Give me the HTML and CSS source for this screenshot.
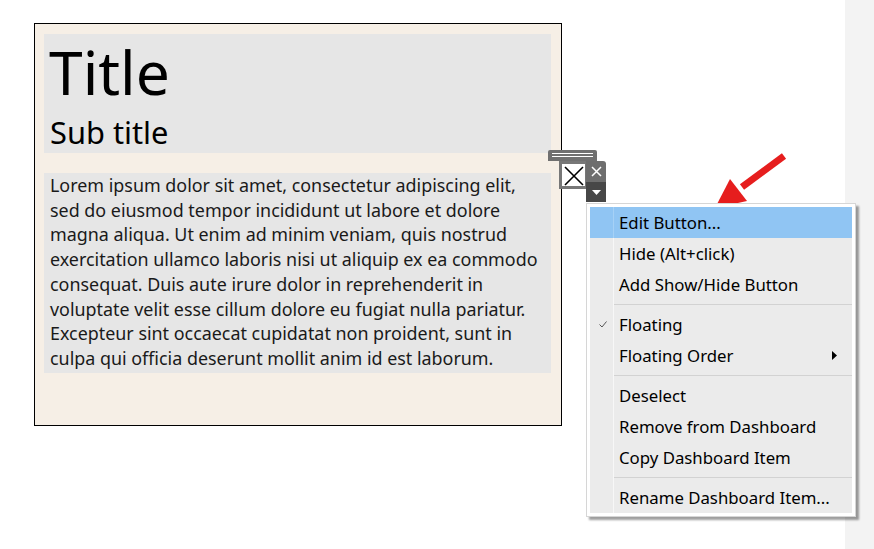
FILE: index.html
```html
<!DOCTYPE html>
<html>
<head>
<meta charset="utf-8">
<link rel="stylesheet" href="styles.css">
</head>
<body>
<div class="page">
  <main class="canvas">
    <section class="panel">
      <div class="heading">
        <div class="title">Title</div>
        <div class="subtitle">Sub title</div>
      </div>
      <div class="text">Lorem ipsum dolor sit amet, consectetur adipiscing elit,<br>sed do eiusmod tempor incididunt ut labore et dolore<br>magna aliqua. Ut enim ad minim veniam, quis nostrud<br>exercitation ullamco laboris nisi ut aliquip ex ea commodo<br>consequat. Duis aute irure dolor in reprehenderit in<br>voluptate velit esse cillum dolore eu fugiat nulla pariatur.<br>Excepteur sint occaecat cupidatat non proident, sunt in<br>culpa qui officia deserunt mollit anim id est laborum.</div>
    </section>

    <div class="grip"><span></span><span></span></div>
    <div class="xbox">
      <svg width="22" height="22" viewBox="0 0 22 22"><path d="M2 3 L20 21 M20 3 L2 21" stroke="#000" stroke-width="1.6" fill="none"/></svg>
    </div>
    <div class="tools">
      <div class="tool-close">
        <svg width="11" height="11" viewBox="0 0 11 11"><path d="M1 1 L10 10 M10 1 L1 10" stroke="#fff" stroke-width="1.5" fill="none"/></svg>
      </div>
      <div class="tool-drop">
        <svg width="9" height="5" viewBox="0 0 9 5"><path d="M0 0 L9 0 L4.5 5 Z" fill="#fff"/></svg>
      </div>
    </div>

    <svg class="arrow" width="90" height="70" viewBox="0 0 90 70">
      <path d="M84 6 L42 37" stroke="#e61e1e" stroke-width="7" stroke-linecap="butt" fill="none"/>
      <path d="M15 58 L30 29 L47 51 Z" fill="#e61e1e"/>
    </svg>

    <div class="menu">
      <div class="menu-inner">
        <div class="item active"><span class="gut"></span><span class="label">Edit Button...</span></div>
        <div class="item"><span class="gut"></span><span class="label">Hide (Alt+click)</span></div>
        <div class="item"><span class="gut"></span><span class="label">Add Show/Hide Button</span></div>
        <div class="sep"><span class="gut"></span><span class="line"></span></div>
        <div class="item"><span class="gut"><svg width="8" height="7" viewBox="0 0 8 7"><path d="M0.5 3.5 L3 6 L7.5 0.5" stroke="#555" stroke-width="1" fill="none"/></svg></span><span class="label">Floating</span></div>
        <div class="item"><span class="gut"></span><span class="label">Floating Order</span><svg class="sub" width="5" height="9" viewBox="0 0 5 9"><path d="M0 0 L5 4.5 L0 9 Z" fill="#000"/></svg></div>
        <div class="sep"><span class="gut"></span><span class="line"></span></div>
        <div class="item"><span class="gut"></span><span class="label">Deselect</span></div>
        <div class="item"><span class="gut"></span><span class="label">Remove from Dashboard</span></div>
        <div class="item"><span class="gut"></span><span class="label">Copy Dashboard Item</span></div>
        <div class="sep"><span class="gut"></span><span class="line"></span></div>
        <div class="item"><span class="gut"></span><span class="label">Rename Dashboard Item...</span></div>
      </div>
    </div>
  </main>
  <aside class="side"></aside>
</div>
</body>
</html>
```
FILE: styles.css
```css
* { box-sizing: border-box; }
html, body { margin: 0; padding: 0; background: #fff; }
body { font-family: "Noto Sans", "Open Sans", sans-serif; color: #000; }

.page { display: flex; width: 874px; height: 549px; overflow: hidden; }
.canvas { position: relative; flex: 1; padding: 23px 0 0 34px; }
.side { width: 29px; background: #f3f3f3; }

.panel {
  width: 528px;
  height: 403px;
  border: 1px solid #000;
  background: #f6efe6;
  padding: 10px 10px 0 9px;
  display: flex;
  flex-direction: column;
  gap: 20px;
}
.heading {
  height: 119px;
  background: #e6e6e6;
  padding: 6px 0 0 5px;
}
.title { font-size: 60.5px; line-height: 64px; }
.subtitle { font-size: 30.8px; line-height: 36px; margin-top: 10px; padding-left: 1px; }

.text {
  height: 200px;
  background: #e6e6e6;
  padding: 0 0 0 6px;
  font-size: 17.9px;
  line-height: 24.7px;
  white-space: nowrap;
  color: #1a1a1a;
}

.grip {
  position: absolute;
  left: 548px; top: 150px;
  width: 49px; height: 11px;
  background: #707070;
  border-radius: 2px 2px 0 0;
  padding: 3px 4px 0 4px;
  display: flex; flex-direction: column; gap: 2px;
}
.grip span { display: block; height: 1px; background: #fff; }

.xbox {
  position: absolute;
  left: 559px; top: 161px;
  width: 28px; height: 28px;
  border: 3px solid #777;
  border-right-width: 2px;
  background: #fff;
  display: flex; align-items: center; justify-content: center;
}
.xbox svg { display: block; }

.tools {
  position: absolute;
  left: 586px; top: 161px;
  width: 20px; height: 41px;
  display: flex; flex-direction: column;
}
.tool-close {
  height: 21px; background: #6e6e6e;
  border-radius: 0 3px 0 0;
  display: flex; align-items: center; justify-content: center;
}
.tool-drop {
  flex: 1; background: #474747;
  display: flex; align-items: center; justify-content: center;
}
.tools svg { display: block; }

.arrow { position: absolute; left: 700px; top: 150px; }

.menu {
  position: absolute;
  left: 586px; top: 203px;
  width: 270px;
  border: 1px solid #d6d6d6;
  background: #fff;
  padding: 3px;
  box-shadow: 3px 3px 2px rgba(0,0,0,0.38);
  font-family: "Noto Sans", "Open Sans", sans-serif;
  font-size: 16.8px;
}
.menu-inner { background: #ebebeb; }
.item {
  display: flex; align-items: center;
  height: 31px;
  position: relative;
  color: #000;
}
.item.active { background: #90c5f3; }
.gut {
  width: 24px; height: 100%;
  border-right: 1px solid #f7f7f7;
  display: flex; align-items: center; justify-content: center;
  padding-left: 2px;
}
.item.active .gut { border-right-color: #a6d1f6; }
.label { padding-left: 5px; white-space: nowrap; }
.sub { position: absolute; right: 15px; top: 11px; }
.sep { display: flex; height: 9px; align-items: center; }
.sep .gut { height: 9px; }
.sep .line { flex: 1; height: 1px; background: #d2d2d2; }
```
